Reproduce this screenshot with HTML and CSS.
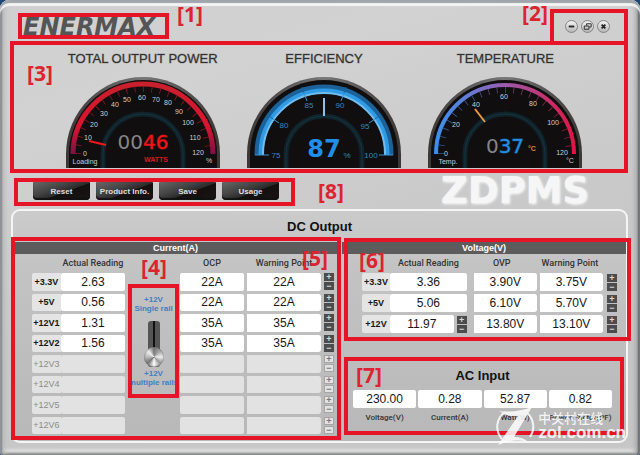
FILE: index.html
```
<!DOCTYPE html>
<html lang="en">
<head>
<meta charset="utf-8">
<title>Enermax ZDPMS</title>
<link rel="stylesheet" href="styles.css">
</head>
<body>
<main class="app">
  <header class="top">
    <div class="brand">ENERMAX<span class="mark"></span><b class="tag tag-1">[1]</b></div>
    <div class="controls">
      <button type="button" aria-label="Minimize"><svg viewBox="0 0 12 12"><path d="M3 6h6" stroke-width="2"/></svg></button>
      <button type="button" aria-label="Restore"><svg viewBox="0 0 12 12"><path d="M5 5V3h5v3.500H8M2.500 5.500h5V9h-5z" stroke-width="1"/></svg></button>
      <button type="button" aria-label="Close"><svg viewBox="0 0 12 12"><path d="M4 4l4 4M8 4l-4 4" stroke-width="2"/></svg></button>
      <span class="mark"></span><b class="tag tag-2">[2]</b>
    </div>
  </header>

  <section class="gauges">
    <figure class="gauge">
      <figcaption>TOTAL OUTPUT POWER</figcaption>
      <svg viewBox="0 0 154 91">
        <defs>
          <linearGradient id="rim" x2="1"><stop offset="0" stop-color="#3c3736"/><stop offset=".5" stop-color="#777"/><stop offset="1" stop-color="#3c3736"/></linearGradient>
          <linearGradient id="red" x2="0" y2="1"><stop offset="0" stop-color="#c8202c"/><stop offset=".6" stop-color="#dc1430"/><stop offset="1" stop-color="#7c1244"/></linearGradient>
          <linearGradient id="heat"><stop offset="0" stop-color="#3b8fec"/><stop offset=".2" stop-color="#5c80d8"/><stop offset=".5" stop-color="#9c5cae"/><stop offset=".75" stop-color="#bf3878"/><stop offset="1" stop-color="#e01545"/></linearGradient>
        </defs>
        <path d="M0 91V77a77 77 0 0 1 154 0v14z" fill="url(#rim)"/>
        <path d="M3 91V77a74 74 0 0 1 148 0v14z" fill="#100e0f"/>
        <path class="arc" d="M7 77a70 70 0 0 1 140 0" stroke="url(#red)" stroke-width="5"/>
        <path class="arc ticks" pathLength="240" d="M12 77a65 65 0 0 1 130 0" stroke="#8c1420" stroke-width="6"/>
        <path class="glow wide" d="M37 91V77a40 40 0 0 1 80 0v14"/><path class="glow" d="M37 91V77a40 40 0 0 1 80 0v14"/>
        <g class="scale">
          <text x="19" y="79">0</text><text x="22" y="63">10</text><text x="28" y="50">20</text><text x="38" y="39">30</text><text x="49" y="30">40</text><text x="61" y="25">50</text><text x="76" y="23">60</text><text x="90" y="25">70</text><text x="102" y="28">80</text><text x="113" y="37">90</text><text x="122" y="48">100</text><text x="129" y="63">110</text><text x="132" y="78">120</text><text x="19" y="87">Loading</text><text x="143" y="86">%</text>
        </g>
        <path d="M23 64l17 4" stroke="#f01820" stroke-width="2"/>
        <text class="digits" x="77" y="72"><tspan fill="#858585">00</tspan><tspan class="lit" fill="#f01418" stroke="#f01418">46</tspan></text>
        <text class="unit" x="90" y="85" fill="#d8181c">WATTS</text>
      </svg>
    </figure>
    <figure class="gauge">
      <figcaption>EFFICIENCY</figcaption>
      <svg viewBox="0 0 154 91">
        <path d="M0 91V77a77 77 0 0 1 154 0v14z" fill="url(#rim)"/>
        <path d="M3 91V77a74 74 0 0 1 148 0v14z" fill="#100e0f"/>
        <path class="arc" d="M10 78v-1a67 67 0 0 1 134 0v1" stroke="#1c6299" stroke-width="5"/>
        <path class="arc" d="M14 78v-1a63 63 0 0 1 126 0v1" stroke="#2f9be6" stroke-width="5"/>
        <path class="arc" d="M16 78v-1a61 61 0 0 1 122 0v1" stroke="#72bdec" stroke-width="2"/>
        <path class="arc" d="M8 78h14M132 78h14M26 42l6 4M128 42l-6 4M57 16l3 8M97 16l-3 8" stroke="#3a94cf" stroke-width="1"/>
        <path class="arc" d="M20 37l6 5M134 37l-6 5M55 10l2 6M99 10l-2 6" stroke="#17649c" stroke-width="1"/>
        <path class="glow wide" d="M39 91V77a38 38 0 0 1 76 0v14"/><path class="glow" d="M39 91V77a38 38 0 0 1 76 0v14"/>
        <path d="M76 21l2 0v18h-2z" fill="#8bc4e6"/>
        <g class="scale blue">
          <text x="29" y="81">75</text><text x="37" y="51">80</text><text x="62" y="31">85</text><text x="93" y="31">90</text><text x="118" y="52">95</text><text x="124" y="81">100</text><text x="100" y="81">%</text>
        </g>
        <text class="digits big" x="77" y="80" fill="#208fe8">87</text>
      </svg>
    </figure>
    <figure class="gauge">
      <figcaption>TEMPERATURE</figcaption>
      <svg viewBox="0 0 154 91">
        <path d="M0 91V77a77 77 0 0 1 154 0v14z" fill="url(#rim)"/>
        <path d="M3 91V77a74 74 0 0 1 148 0v14z" fill="#100e0f"/>
        <path class="arc" d="M8 77a69 69 0 0 1 138 0" stroke="url(#heat)" stroke-width="4"/>
        <path class="arc ticks" pathLength="240" d="M13 77a64 64 0 0 1 128 0" stroke="url(#heat)" stroke-width="6" opacity=".6"/>
        <path class="glow wide" d="M37 91V77a40 40 0 0 1 80 0v14"/><path class="glow" d="M37 91V77a40 40 0 0 1 80 0v14"/>
        <g class="scale">
          <text x="18" y="79">0</text><text x="28" y="50">20</text><text x="48" y="30">40</text><text x="76" y="22">60</text><text x="105" y="29">80</text><text x="125" y="48">100</text><text x="134" y="78">120</text><text x="20" y="87">Temp.</text><text x="142" y="86">°C</text>
        </g>
        <path d="M47 32l10 13" stroke="#e89a3c" stroke-width="2"/>
        <text class="digits" x="77" y="76"><tspan fill="#858585">0</tspan><tspan class="lit" fill="#208fe8" stroke="#208fe8">37</tspan></text>
        <text class="unit" x="104" y="74" fill="#d58a32">°C</text>
      </svg>
    </figure>
    <span class="mark"></span><b class="tag tag-3">[3]</b>
  </section>

  <div class="bar">
    <nav class="actions">
      <button type="button">Reset</button><button type="button">Product Info.</button><button type="button">Save</button><button type="button">Usage</button>
      <span class="mark"></span><b class="tag tag-8">[8]</b>
    </nav>
    <div class="product">ZDPMS</div>
  </div>

  <section class="panel">
    <h1>DC Output</h1>
    <div class="outputs">
      <section class="current">
        <h2>Current(A)</h2>
        <div class="current-body">
          <table class="readings">
            <colgroup><col class="c-name"><col></colgroup>
            <thead><tr><td class="blank"></td><th>Actual Reading</th></tr></thead>
            <tbody>
              <tr><th>+3.3V</th><td>2.63</td></tr>
              <tr><th>+5V</th><td>0.56</td></tr>
              <tr><th>+12V1</th><td>1.31</td></tr>
              <tr><th>+12V2</th><td>1.56</td></tr>
              <tr class="off"><th>+12V3</th><td></td></tr>
              <tr class="off"><th>+12V4</th><td></td></tr>
              <tr class="off"><th>+12V5</th><td></td></tr>
              <tr class="off"><th>+12V6</th><td></td></tr>
            </tbody>
          </table>
          <div class="rail">
            <span class="rail-name">+12V<br>Single rail</span>
            <input type="range" min="0" max="1" value="1" aria-label="+12V rail mode">
            <span class="rail-name">+12V<br>multiple rails</span>
            <span class="mark"></span><b class="tag tag-4">[4]</b>
          </div>
          <table class="limits">
            <colgroup><col class="c-ocp"><col><col class="c-step"></colgroup>
            <thead><tr><th>OCP</th><th>Warning Point</th><td class="blank"></td></tr></thead>
            <tbody>
              <tr><td>22A</td><td>22A</td><td class="step"><button type="button">+</button><button type="button">−</button></td></tr>
              <tr><td>22A</td><td>22A</td><td class="step"><button type="button">+</button><button type="button">−</button></td></tr>
              <tr><td>35A</td><td>35A</td><td class="step"><button type="button">+</button><button type="button">−</button></td></tr>
              <tr><td>35A</td><td>35A</td><td class="step"><button type="button">+</button><button type="button">−</button></td></tr>
              <tr class="off"><td></td><td></td><td class="step"><button type="button" disabled>+</button><button type="button" disabled>−</button></td></tr>
              <tr class="off"><td></td><td></td><td class="step"><button type="button" disabled>+</button><button type="button" disabled>−</button></td></tr>
              <tr class="off"><td></td><td></td><td class="step"><button type="button" disabled>+</button><button type="button" disabled>−</button></td></tr>
              <tr class="off"><td></td><td></td><td class="step"><button type="button" disabled>+</button><button type="button" disabled>−</button></td></tr>
            </tbody>
          </table>
        </div>
        <span class="mark"></span><b class="tag tag-5">[5]</b>
      </section>

      <div class="side">
        <section class="voltage">
          <h2>Voltage(V)</h2>
          <div class="voltage-body">
            <table class="volts">
              <colgroup><col class="c-rail"><col class="c-read"><col class="c-tune"><col class="c-ovp"><col><col class="c-adjust"></colgroup>
              <thead><tr><td class="blank"></td><th colspan="2">Actual Reading</th><th>OVP</th><th>Warning Point</th><td class="blank"></td></tr></thead>
              <tbody>
                <tr><th>+3.3V</th><td colspan="2">3.36</td><td class="apart">3.90V</td><td>3.75V</td><td class="step"><button type="button">+</button><button type="button">−</button></td></tr>
                <tr><th>+5V</th><td colspan="2">5.06</td><td class="apart">6.10V</td><td>5.70V</td><td class="step"><button type="button">+</button><button type="button">−</button></td></tr>
                <tr><th>+12V</th><td>11.97</td><td class="step"><button type="button">+</button><button type="button">−</button></td><td class="apart">13.80V</td><td>13.10V</td><td class="step"><button type="button">+</button><button type="button">−</button></td></tr>
              </tbody>
            </table>
          </div>
          <span class="mark"></span><b class="tag tag-6">[6]</b>
        </section>
        <section class="ac">
          <h1>AC Input</h1>
          <dl>
            <div><dt>Voltage(V)</dt><dd>230.00</dd></div>
            <div><dt>Current(A)</dt><dd>0.28</dd></div>
            <div><dt>Watt(W)</dt><dd>52.87</dd></div>
            <div><dt>Power Factor(PF)</dt><dd>0.82</dd></div>
          </dl>
          <span class="mark"></span><b class="tag tag-7">[7]</b>
        </section>
      </div>
    </div>
  </section>

  <div class="watermark">
    <svg viewBox="0 0 40 38"><path d="M9 5a18 18 0 0 0-3 27M31 6a18 18 0 0 1 3 24" fill="none" stroke="#fff" stroke-width="2"/><path d="M3 4Q20 6 36 0L18 30Q27 30 32 35Q17 31 2 38L22 9Q12 10 3 4z" fill="#fff"/></svg>
    <div><span class="wm-name" lang="zh">中关村在线</span><span class="wm-site">zol.com.cn</span></div>
  </div>
</main>
</body>
</html>
```
FILE: styles.css
```
* { box-sizing: border-box; }

body {
  margin: 0;
  background: #1d4777;
  font-family: "Liberation Sans", Arial, sans-serif;
  color: #161616;
}

button { margin: 0; padding: 0; font-family: inherit; }

.app {
  position: relative;
  min-height: 100vh;
  padding: 0 12px 11px 11px;
  border-radius: 9px 9px 4px 4px;
  background: linear-gradient(165deg, #cfcfcf 0%, #d2d2d2 20%, #cecece 35%, #c8c8c8 60%, #c6c6c6 100%);
  box-shadow: inset 0 3px 1px #9fa5ab, inset 0 6px 1px #f4f4f4, inset 2px 0 2px #808488, inset -2px 0 2px #5e6265, inset 5px 0 4px #bcbcbc, inset -5px 0 4px #aaa, inset 0 -2px 2px #777, inset 0 -6px 3px #dedede;
}

/* Numbered call-outs */
.mark {
  position: absolute;
  inset: 0;
  border: 4px solid #e61427;
  pointer-events: none;
}
.tag {
  position: absolute;
  font: 700 21px/24px "Open Sans", sans-serif;
  color: #dc2430;
  white-space: nowrap;
}
.tag-1 { left: 159px; top: -11px; }
.tag-2 { right: 80px; top: -8px; }
.tag-3 { left: 17px; top: 20px; }
.tag-4 { left: 13px; top: -29px; }
.tag-5 { right: 10px; top: 4px; }
.tag-6 { left: 17px; top: 6px; }
.tag-7 { left: 14px; top: 6px; }
.tag-8 { right: -49px; top: 1px; }

/* Header */
.top {
  display: flex;
  justify-content: space-between;
  height: 41px;
  padding-left: 7px;
}
.brand {
  position: relative;
  width: 151px;
  height: 26px;
  margin-top: 13px;
  padding-left: 5px;
  font: italic 700 24px/29px "DejaVu Sans", sans-serif;
  color: #555;
}
.controls {
  position: relative;
  display: flex;
  gap: 3px;
  width: 78px;
  height: 36px;
  margin-top: 9px;
  padding: 11px 0 0 15px;
}
.controls button {
  width: 13px;
  height: 13px;
  border: 1px solid #858585;
  border-radius: 50%;
  background: linear-gradient(#f4f4f4, #b5b5b5);
}
.controls svg { display: block; width: 11px; height: 11px; fill: none; stroke: #222; }

/* Gauges */
.gauges {
  position: relative;
  display: grid;
  grid-template-columns: repeat(3, 1fr);
  margin-left: -1px;
  padding: 10px 32px 5px 42px;
}
.gauge {
  display: flex;
  flex-direction: column;
  align-items: center;
  gap: 10px;
  margin: 0;
}
.gauge figcaption { font-size: 13px; line-height: 16px; color: #303030; -webkit-text-stroke: 1px rgba(48, 48, 48, .3); }
.gauge svg { display: block; width: 154px; height: 91px; }
.arc { fill: none; }
.ticks { stroke-dasharray: 1 9; }
.glow { fill: none; stroke: #17343e; stroke-width: 1; }
.glow.wide { stroke: #10222a; stroke-width: 5; }
.scale { font-size: 7px; fill: #cfcfcf; text-anchor: middle; }
.scale.blue { font-size: 8px; fill: #3088c4; }
.digits { font: 20px "DejaVu Sans", sans-serif; text-anchor: middle; }
.digits.big { font-size: 24px; font-weight: 700; }
.lit { stroke-opacity: .5; stroke-width: 1px; }
.unit { font-size: 7px; font-weight: 700; text-anchor: middle; }

/* Action bar */
.bar {
  display: flex;
  justify-content: space-between;
  margin-top: 5px;
  padding: 0 39px 0 3px;
}
.actions {
  position: relative;
  display: flex;
  gap: 6px;
  height: 28px;
  padding: 4px 16px 6px 19px;
}
.actions button {
  width: 57px;
  border: 0;
  border-radius: 1px 1px 4px 4px;
  background: linear-gradient(160deg, #686868 0%, #454545 35%, #2c2b2b 55%, #141010 57%, #1b1414 100%);
  box-shadow: inset 0 -2px 1px #111;
  font-size: 8px;
  font-weight: 700;
  color: #ddd;
}
.product {
  font: 700 37px/26px "DejaVu Sans", sans-serif;
  color: #f6f6f6;
  text-shadow: 1px 1px 3px #fff;
}

/* Output panel */
.panel {
  margin-top: 3px;
  padding-bottom: 4px;
  border: 2px solid #f5f5f5;
  border-radius: 9px;
  background: linear-gradient(#cbcbcb, #c3c3c3 25%, #b8b8b8);
}
h1 { margin: 0; font-size: 13px; line-height: 31px; text-align: center; color: #111; }
h2 {
  margin: 0;
  background: #5c5c5c;
  font-size: 9px;
  line-height: 12px;
  text-align: center;
  color: #fff;
}
.outputs { display: grid; grid-template-columns: 325fr 284fr; gap: 4px; }
.current, .voltage { position: relative; }
.current > .mark { inset: -5px -3px -3px -2px; }
.voltage > .mark { inset: -4px -5px -5px 2px; }

.current-body {
  display: grid;
  grid-template-columns: 93fr 55fr 154fr;
  padding: 0 4px 0 19px;
}
.voltage-body { padding: 0 9px 0 20px; }

table { width: 100%; table-layout: fixed; border-collapse: separate; border-spacing: 0 3px; }
.readings, .limits { height: 183px; }
th, td { height: 17px; padding: 0; text-align: center; line-height: 16px; }
.volts th, .volts td { height: 18px; }
thead th, thead td, .volts thead th, .volts thead td { height: 13px; line-height: 13px; }
thead th { font: 500 9px/13px Roboto, sans-serif; color: #333; white-space: nowrap; }
tbody th { background: #e4e4e4; border-radius: 2px 0 0 2px; font-size: 9px; white-space: nowrap; }
tbody td { background: #fff; border-radius: 2px; font-size: 12px; background-clip: padding-box; }
.off th, .off td { background-color: #e2e2e2; }
.off th { font-weight: 400; color: #8c8c8c; }

.c-name { width: 31%; }
.c-ocp { width: 64px; }
.c-step { width: 13px; }
.c-rail { width: 28px; }
.c-read { width: 25%; }
.c-tune { width: 13px; }
.c-ovp { width: 70px; }
.c-adjust { width: 14px; }

.limits td + td, .limits th + th { border-left: 3px solid transparent; }
.volts .apart { border-left: 7px solid transparent; }
.volts .apart + td { border-left: 3px solid transparent; }
tbody .step, .off .step { background: none; text-align: right; font-size: 0; line-height: 0; }
.limits td.step { border-left: 0; }
.step button {
  display: block;
  width: 10px;
  height: 8px;
  margin-left: auto;
  border: 0;
  background: #4c4c4c;
  font: 700 9px/8px "Liberation Sans", sans-serif;
  color: #d8d8d8;
}
.step button + button { margin-top: 1px; }
.step button:disabled { background: #e2e2e2; color: #777; outline: 1px solid #a5a5a5; outline-offset: -1px; }

/* Rail selector */
.rail {
  position: relative;
  display: flex;
  flex-direction: column;
  align-items: center;
  align-self: start;
  height: 114px;
  margin: 30px 1px 0 3px;
  padding-top: 11px;
}
.rail-name {
  font-size: 8px;
  font-weight: 700;
  line-height: 9px;
  text-align: center;
  white-space: nowrap;
  color: #3d80c6;
}
.rail input {
  appearance: none;
  writing-mode: vertical-lr;
  width: 20px;
  height: 46px;
  margin: 8px 0 2px;
  background: none;
}
.rail input::-webkit-slider-runnable-track {
  width: 12px;
  height: 46px;
  border-radius: 3px;
  background: linear-gradient(90deg, #555 5px, #111 5px, #111 7px, #555 7px);
}
.rail input::-webkit-slider-thumb {
  appearance: none;
  width: 20px;
  height: 20px;
  margin-left: -4px;
  border-radius: 50%;
  background: conic-gradient(#777, #aaa, #eee, #999, #fff, #777, #bbb, #eee, #777);
  box-shadow: inset 0 0 2px #555;
}

/* AC input */
.ac { position: relative; margin-top: 21px; padding: 4px 14px 0 11px; height: 78px; }
.ac > .mark { inset: 0 2px 0 2px; }
.ac h1 { line-height: 29px; }
.ac dl { display: grid; grid-template-columns: repeat(4, 1fr); gap: 2px; margin: 0; }
.ac dl div { display: flex; flex-direction: column-reverse; gap: 3px; min-width: 0; }
.ac dd { margin: 0; border-radius: 2px; background: #fff; font-size: 12px; line-height: 18px; text-align: center; }
.ac dt { display: flex; justify-content: center; font: 500 8px/13px Roboto, sans-serif; white-space: nowrap; color: #333; }

/* Site watermark */
.watermark {
  position: absolute;
  right: 14px;
  bottom: 10px;
  display: flex;
  gap: 2px;
  align-items: center;
  color: #fff;
  opacity: .85;
}
.watermark svg { width: 40px; height: 38px; }
.watermark div { display: flex; flex-direction: column; }
.wm-name { font: 500 13px/14px "Noto Sans CJK SC", sans-serif; }
.wm-site { font: 700 17px/16px "Liberation Sans", sans-serif; }
```
